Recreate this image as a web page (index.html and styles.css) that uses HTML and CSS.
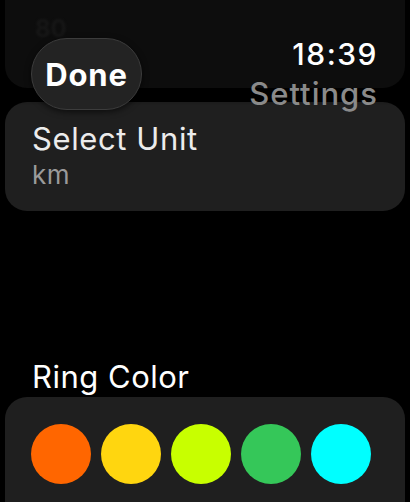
FILE: index.html
```html
<!DOCTYPE html>
<html lang="en">
<head>
  <meta charset="UTF-8">
  <meta name="viewport" content="width=device-width, initial-scale=1">
  <title>Settings</title>
  <link rel="stylesheet" href="styles.css">
</head>
<body>

  <div class="header">
    <button class="done">Done</button>
    <div class="title">
      <div class="time">18:39</div>
      <div class="name">Settings</div>
    </div>
  </div>

  <div class="list">
    <div class="card faded">
      <span class="faded-text">80</span>
    </div>

    <div class="card unit">
      <div class="row-title">Select Unit</div>
      <div class="row-value">km</div>
    </div>

    <div class="section-label">Ring Color</div>

    <div class="card colors">
      <span class="swatch orange"></span>
      <span class="swatch yellow"></span>
      <span class="swatch lime"></span>
      <span class="swatch green"></span>
      <span class="swatch cyan"></span>
    </div>
  </div>

</body>
</html>
```

FILE: styles.css
```css
html, body { margin: 0; background: #000; }
body { width: 410px; height: 502px; overflow: hidden; position: relative; font-family: Inter, "Noto Sans", sans-serif; color: #fff; }

.header { position: absolute; z-index: 2; top: 0; left: 0; right: 0; height: 106px; display: flex; justify-content: space-between; align-items: flex-start; padding: 0 33px 0 31px; box-sizing: border-box; background: linear-gradient(to bottom, rgba(0,0,0,0.5) 0, rgba(0,0,0,0.5) 90px, rgba(0,0,0,0) 106px); }
.done { margin-top: 38px; width: 111px; height: 72px; border-radius: 36px; background: #232323; border: 1.5px solid #3c3c3c; color: #fff; font-family: inherit; font-size: 31px; font-weight: 700; letter-spacing: 0.8px; padding: 0; box-shadow: 0 2px 6px rgba(0,0,0,0.6); }
.title { text-align: right; margin-top: 36px; }
.time { font-size: 30px; font-weight: 500; line-height: 36px; letter-spacing: 1.5px; margin-right: -1px; }
.name { font-size: 31px; font-weight: 500; color: #8a8a8a; line-height: 40px; letter-spacing: 1px; margin-top: 2px; margin-right: -1px; }

.list { padding: 0 5px; }
.card { background: #1f1f1f; border-radius: 22px; }
.faded { height: 88px; background: #1a1a1a; border-radius: 0 0 22px 22px; padding: 14px 30px 0; box-sizing: border-box; }
.faded-text { font-size: 24px; font-weight: 700; color: #2c2c2c; filter: blur(1px); }

.unit { margin-top: 14px; height: 109px; padding: 18px 27px 0; box-sizing: border-box; }
.row-title { font-size: 31px; color: #ececec; line-height: 38px; letter-spacing: 0.6px; }
.row-value { font-size: 26px; color: #9a9a9a; line-height: 34px; letter-spacing: 0.5px; }

.section-label { margin-top: 146px; padding-left: 27px; font-size: 31px; line-height: 40px; letter-spacing: 0.5px; }

.colors { height: 130px; display: flex; gap: 10px; padding: 27px 26px 0; box-sizing: border-box; border-radius: 22px 22px 0 0; }
.swatch { width: 60px; height: 60px; border-radius: 50%; flex: none; }
.orange { background: #ff6600; }
.yellow { background: #ffd60f; }
.lime { background: #c8ff00; }
.green { background: #35c759; }
.cyan { background: #00ffff; }
```
